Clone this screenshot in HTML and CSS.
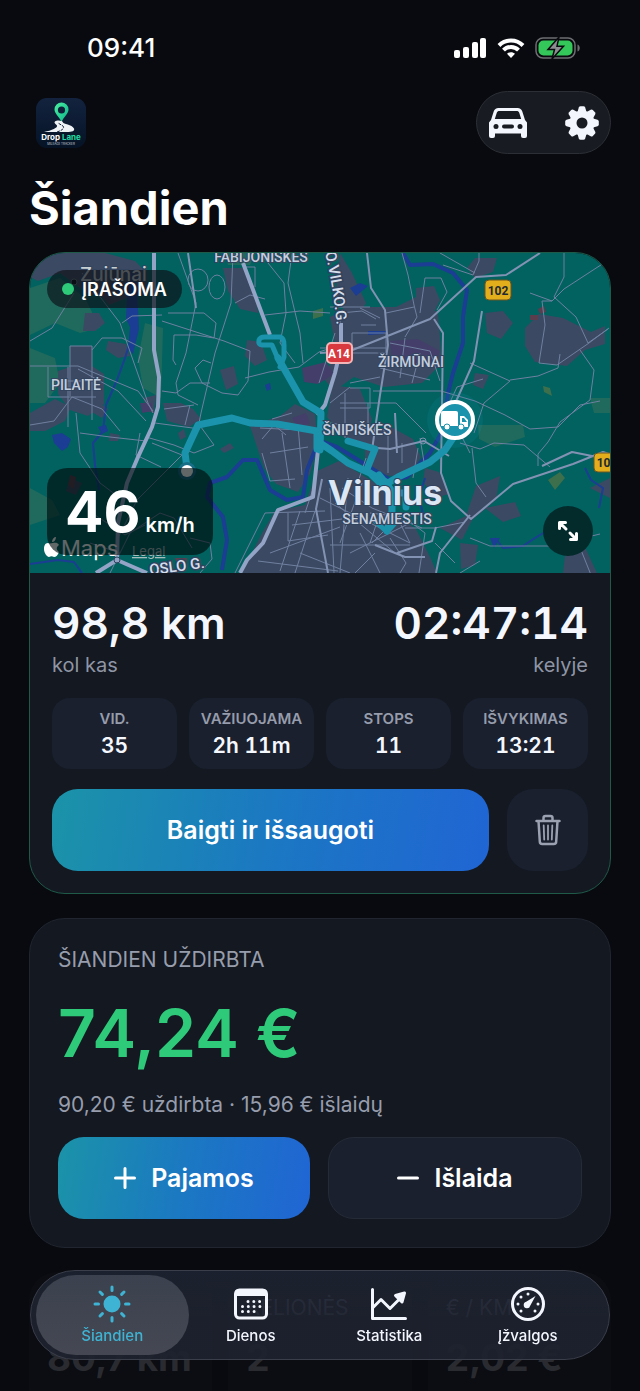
FILE: index.html
```html
<!DOCTYPE html>
<html lang="lt">
<head>
    <meta charset="utf-8">
    <meta name="viewport" content="width=device-width, initial-scale=1">
    <title>Drop Lane</title>
    <link rel="stylesheet" href="styles.css">
</head>
<body>
    <div class="status-bar">
        <span class="clock">09:41</span>
        <div class="status-icons">
            <svg width="33" height="20" viewBox="0 0 33 20" fill="#fff">
                <rect x="0" y="12" width="6" height="8" rx="2"/>
                <rect x="9" y="9" width="6" height="11" rx="2"/>
                <rect x="18" y="4" width="6" height="16" rx="2"/>
                <rect x="26" y="0" width="6" height="20" rx="2"/>
            </svg>
            <svg width="28" height="20" viewBox="0 0 28 20" fill="none" stroke="#fff" stroke-width="4">
                <path d="M2 7.500C8.500 .8 19.500 .8 26 7.500"/>
                <path d="M6.500 12.200C10.500 8 17.500 8 21.500 12.200"/>
                <path d="M14 20l-4-4.200c2-2.100 6-2.100 8 0z" fill="#fff" stroke="none"/>
            </svg>
            <svg width="46" height="22" viewBox="0 0 46 22">
                <rect x="1" y="1" width="39" height="20" rx="7" fill="none" stroke="#6c6e72" stroke-width="1.500"/>
                <rect x="3.500" y="3.500" width="34" height="15" rx="5" fill="#34c759"/>
                <path d="M42.500 7.500c3 1 3 6 0 7z" fill="#6c6e72"/>
                <path d="M24 0L13 12.500h6.500L17 22l11.500-12.800H22z" fill="#8b8d90" stroke="#080a0f" stroke-width="1.500"/>
            </svg>
        </div>
    </div>

    <header class="toolbar">
        <svg class="logo" width="50" height="50" viewBox="0 0 50 50" role="img" aria-label="Drop Lane">
            <defs>
                <linearGradient id="logoBg" x1="0" y1="0" x2="0" y2="1">
                    <stop offset="0" stop-color="#13233f"/>
                    <stop offset="1" stop-color="#061326"/>
                </linearGradient>
                <linearGradient id="pin" x1="0" y1="0" x2="1" y2="1">
                    <stop offset="0" stop-color="#4df0a0"/>
                    <stop offset="1" stop-color="#08b58a"/>
                </linearGradient>
            </defs>
            <rect width="50" height="50" rx="11" fill="url(#logoBg)"/>
            <path d="M25.500 24c-2-5-7-8.500-7-12.500a7 7 0 0 1 14 0c0 4-5 7.500-7 12.500z" fill="url(#pin)"/>
            <circle cx="25.500" cy="12" r="3.600" fill="#10203b"/>
            <path d="M8 34c8-1.500 14-4.500 13-6.500-1-1.500-3.500-2.500-2-4 2-1.800 8-1 8 1 0 1.500 9 2 11 6 1 2.500-2 3.500-7 3.500z" fill="#eef2f5"/>
            <path d="M21 34c5-1.500 8-4 6-6l-5-3" fill="none" stroke="#14233c" stroke-width="1" stroke-dasharray="3 1"/>
            <text class="logo-name" x="25" y="42">Drop <tspan fill="#21dba4">Lane</tspan></text>
            <text class="logo-tag" x="25" y="47">MILEAGE TRACKER</text>
        </svg>
        <div class="toolbar-actions">
            <button aria-label="Automobilis">
                <svg width="40" height="32" viewBox="0 0 40 32">
                    <path d="M10.500 1h19c2.500 0 4 1.200 4.800 3.500L37 13l2 2.500V29a2 2 0 0 1-2 2h-2a2 2 0 0 1-2-2v-2.500H7V29a2 2 0 0 1-2 2H3a2 2 0 0 1-2-2V15.500L3 13l2.700-8.500C6.500 2.200 8 1 10.500 1z" fill="#f3f6fd"/>
                    <path d="M11.500 4h17c1.500 0 2.300.6 2.800 2l1.900 6H6.800l1.900-6c.5-1.400 1.300-2 2.800-2z" fill="#181b21"/>
                    <circle cx="8" cy="19.500" r="2.500" fill="#181b21"/>
                    <circle cx="32" cy="19.500" r="2.500" fill="#181b21"/>
                    <rect x="14" y="17.500" width="12" height="4" rx="2" fill="#181b21"/>
                </svg>
            </button>
            <button aria-label="Nustatymai">
                <svg width="34" height="34" viewBox="-17 -17 34 34">
                    <g fill="#f3f6fd">
                        <circle r="12.500"/>
                        <path id="tooth" d="M-4.500-11L-3.200-15.500Q-2.800-16.800-1.500-16.800H1.500Q2.800-16.800 3.200-15.500L4.500-11z"/>
                        <use href="#tooth" transform="rotate(45)"/>
                        <use href="#tooth" transform="rotate(90)"/>
                        <use href="#tooth" transform="rotate(135)"/>
                        <use href="#tooth" transform="rotate(180)"/>
                        <use href="#tooth" transform="rotate(225)"/>
                        <use href="#tooth" transform="rotate(270)"/>
                        <use href="#tooth" transform="rotate(315)"/>
                    </g>
                    <circle r="5.500" fill="#181b21"/>
                </svg>
            </button>
        </div>
    </header>

    <main>
        <h1>Šiandien</h1>

        <section class="card trip">
            <div class="map">
                <svg class="map-canvas" viewBox="0 0 580 320" preserveAspectRatio="xMidYMid slice">
                    <rect width="580" height="320" fill="#016260"/>
                    <!-- woodland -->
                    <g fill="#1f6a5d">
                        <path d="M0 35l30-10 25 20 15 30-20 5-25-10-25 12zM115 70l18 5-2 70-18-10-5-30zM0 95l25 10 5 25-15 20-15 0zM0 235l22 12 8 15-30 10zM195 0h30l-5 12h-22zM448 172h45l2 12-30 10-16-8zM280 285l20-5 5 20-20 18zM560 145h20v15h-16z"/>
                        <path fill="#3d6f4c" d="M518 227l12-8 5 6-10 12zM513 133l7 2 2 8-8-4zM283 58l10-3v8l-10 3z"/>
                    </g>
                    <!-- built-up areas -->
                    <g fill="#3c4962">
                        <path d="M0 0h75l30 8 12 12v22H60L30 20 8 28 0 24z"/>
                        <path d="M55 60h14l6 10-10 8h-12zM40 93h22v20l12 8v30l-16 12-18-6-12-16V118l12-4zM0 160l25-14 16 8-6 14-20 10H0zM60 158l10-8 8 6-6 9zM80 180l10 2-2 6-9 0zM78 88l18 3 4 12-12 2-12-8zM63 12h22l20 12-6 20-20 8-12-14z"/>
                        <path d="M133 150h18l12 6 8 10-12 8-22-6zM114 145l12-3-2 18-8-2zM148 180l6-4 2 8-6 3zM193 15l22 0 10 20 3 25-18-4-12-18zM217 87l14 2 6 18-12 6-10-10zM190 117l14-4 4 18-12 6z"/>
                        <path d="M220 173l30-10 15-12 20 10 3 30-8 30-12 18-22-8-12-16zM190 196l10-6 4 5-10 5zM245 258l30-6 12-34 22-10 20 12 25 15 10 25 22 16 15 30 6 14H212l20-40z"/>
                        <path d="M300 64l22-10h44l20-10 22 16 4 50-20 20-38 4-30-10-20 14-10-12 12-30zM386 35l18-2 6 14-10 20-14-6zM310 0l12 20 14 30-8 14-14-6-8-20zM302 132l28 4 12 30-5 24-24-6-16-20z"/>
                        <path d="M335 180l26-6 22 12 8 18-12 20-30-2-14-16zM395 215l14 4 10 22-14 4-12-16zM445 5h22l-4 14-18 6-8-10zM455 60l18-2 10 12-12 16-14-6zM495 75l14-14 24 4 28 14 14-6v18l-20 6-18 16-32-4-10-16zM445 120l14 2-6 14-10-4zM410 275l26-12 10-30 24-10-4 24-24 20-10 20zM455 255l30-6 6 14-18 6zM535 302l20-8 12 26h-34zM560 235l20-10v20zM430 290l18 2-3 20-14 4zM40 225l12 5-6 12-10-4z"/>
                        <path fill="#433f6a" d="M360 88l28-2 22 12-4 12-20 4-24-8zM272 115l24-6 8 12-16 10-14-2zM262 165l14-5 4 10-12 6zM110 150l12 0 0 8-10 2z"/>
                        <path fill="#5a3e4e" d="M508 56l6-3 2 6-6 2zM40 222l6 2-2 12-6-4zM500 62h8v5h-8zM145 305h12v6h-10z"/>
                    </g>
                    <!-- rivers and ponds -->
                    <g fill="none" stroke="#1b3d93" stroke-linejoin="round">
                        <path stroke-width="4" d="M373 0l7 12 23-1 20 9 14 17-4 27v26l-10 30-5 20-5 37-13 23-23 24-17 3-27-17-26-16-14-5-6 3-10 25-4 27-16 3-17-10-13-30h-14l-16 17-17 6-3 14 16 20 4 23-5 30"/>
                        <path stroke-width="2" d="M103 20v60l-8 25-8 22-11 25-3 26-10 12 2 22 4 25M0 311l28-4 16 2 8 11M465 285l8 10 20-2 12-8 10-6M555 215l6 12 12 8-4 20M395 225l-6 20 5 20"/>
                        <path fill="#1b3d93" stroke="none" d="M98 20l8-4 3 60-6 25-5-5 2-22-4-8zM22 182l10-2 9 6-3 8-6 4-8-8zM68 174l8-2 2 6-6 3zM320 35l10-5 8 3-12 10zM338 78h18l-2 3-16 1zM235 132l5-2 1 6-4 2zM460 285l10 0-6 10z"/>
                    </g>
                    <!-- side streets -->
                    <g fill="none" stroke="#6f80a0" stroke-width="1" stroke-linejoin="round">
                        <path d="M0 88l22-13 22-35M52 20l38 50 28 80 5 10M0 113h48l60 25 15 20M48 116l40 22 28 30M40 93h22v74M40 93v50M18 114v30h48M28 128h32M38 114v60M0 172l24-4 18-24 30 12 18 22M46 160l4 40 20 30 16 12M50 180l30 4 36 4M62 97l10-12 20 0 20 10-4 15M92 70l10-7 30-1"/>
                        <path d="M148 0l18 50-10 50-10 30 2 12 20 10M138 60h36l12 10-2 15-18-3-22 0-1 25 3 5M203 0l-2 50-16 50-14 60-2 10M132 68l62 20 26 10-2 30-10 14-16-2-20-10-7-15 8-8 8 3M132 138l14 2 14-10 20 0M125 170l45 6M134 156l30-4M160 152l-5 20M168 170l16 22-20 8-20-8-28-8M122 190l30 12-25 25-20 20-20 40M110 180l-4 22 25 12M215 14h10v20M205 50l15-8 15 4"/>
                        <ellipse cx="168" cy="27" rx="10" ry="11"/>
                        <ellipse cx="187" cy="34" rx="8" ry="12"/>
                        <path d="M230 0l24 30 2 30-6 30 15 20M262 0l-4 30 12 50 3 30M300 60l-30-2-35 4M215 125l24-6 30-5 20-15 12-4M230 175l40 2M232 186l12-14 12 10M240 200l38-6M232 200l8 28 25-2M252 180l8 55M268 172l4 50M262 160l-20 6"/>
                        <path d="M305 80l-16 50M300 54h40M310 70v-10l22-2 14 8M322 80h34v20h-34zM331 72h15M290 95l66 0M315 140v45M310 150h28v26M320 135h20v20h-30M300 170l55 8M338 150h28l30 30M320 130l30-6M300 150l20-16M356 60l28-6M350 115l50 12M360 90l40 8 10 30M375 85l-5 40M390 100l-8 30M330 55l20 10"/>
                        <path d="M372 0l6 22 6 30 3 12-12 20M390 60l5-35 16 0 6 14-10 18M413 12l30 10 6-14V0M410 0l35 20M500 40l22 8 12-12 46-30M522 48l-10 0 3 24-6 38 18 2 32-22 20-15M534 0v24l-10 20 22 20 12 26 20-14M480 127l28-4 20-8 2-14M550 97l14 20-4 30-30 22-12 20-10 12v12M570 148l-20 4-22 22-28 2-25-14-30-14-34-10-68 0M440 110l40 18-26 22-10 30M415 160l12-26 26-8M430 190l20 6 14-6 30 2 26 22M442 195l4 35 10 14M545 282l18 45"/>
                        <path d="M440 285l20 8 60 0 50-12M375 275l30 0 30-6M430 180l10 20M395 215l-5-30"/>
                        <path d="M205 320l30-60 60-2M258 260v28l40-6M262 272l50-6M240 300l70-26M228 308l80 10M270 258l-20 60M285 258l-20 62M300 235l4 85M318 225l-8 95M332 230l-22 60M285 230l-10 30M290 245l90 45M305 250l60 50M320 300l60-30M330 280l20 40M350 260l-10 30M300 292h80M360 250l20 40M340 260l40 5M270 300l50 20M345 300l-20 20M372 260l-30 30M312 235l30 20 50 20M358 180v40M372 190v20M336 205l-10 30M388 195l-5 30M80 320l20-40 30-20 14 5 18 30M60 290l30 10M65 262l30 20 20-10M170 320l12-14-2-16-20-5M360 285l16 25-6 10M375 265l20 15-6 40M405 290l20 20M430 320l20-12"/>
                    </g>
                    <!-- main roads -->
                    <g fill="none" stroke="#8292b2" stroke-linejoin="round">
                        <path stroke-width="2" d="M158 0l8 55M337 0l4 35 14 22 3 35-8 50-8 55M290 100l30-2 80-32 46-42 30-2 34-22M452 58l-8 50-20 45-8 30M404 66l9 14-2 140 10 28 20 18 42-35 60-20 30-12 25 8M335 194l25 2 34-8 25 15M367 200l-2-40M440 262l-30 38-4 20M292 226l-6 30 12 64M367 300l35-12 4-14M345 292l30 12 20 0M512 213l30-14 25 5"/>
                        <circle cx="393" cy="188" r="3" stroke-width="1"/>
                        <g stroke="#93a4c6" stroke-width="4">
                            <path d="M124 0v97l5 27-1 30-6 20-14 30-11 26-9 40-1 37-21 13M87 307l30 13"/>
                            <path d="M213 10l27 72M311 70v24l-6 26-10 32-8 10M288 197l-5 47-35 13-15 33-16 17-7 13"/>
                        </g>
                    </g>
                    <circle cx="87" cy="307" r="3" fill="none" stroke="#33445f"/>
                    <!-- recorded route -->
                    <g fill="none" stroke="#1b93ac" stroke-width="7" stroke-linejoin="round" stroke-linecap="round">
                        <path d="M157 215l-2-15 13-28 34-7 18 5 27 1 40 7v18M248 105l25 44 18 11-1 37M290 190l12 8 16 12 22 10 18 10 10-6 32-15 15-12 12-18M318 188l27 8-8 20M349 222l13 16v20l-5 20M340 220l22 22M362 240h14v14"/>
                        <path d="M232 92q-4 0-3-5 1-3 6-3h15q4 1 4 8v12l-4 10M232 92h10l6 14" stroke-width="5"/>
                        <path d="M345 268l12 11 9-10" stroke-width="5"/>
                    </g>
                    <circle cx="157" cy="218" r="9" fill="#176f87"/>
                    <circle cx="157" cy="218" r="6" fill="#fff"/>
                    <!-- place names -->
                    <circle cx="44" cy="29" r="3" fill="#030b10" stroke="#5d7577"/>
                    <text class="place village" x="50" y="28">Zujūnai</text>
                    <text class="place" x="231" y="9" text-anchor="middle">FABIJONIŠKĖS</text>
                    <text class="place" x="46" y="137" text-anchor="middle">PILAITĖ</text>
                    <text class="place" x="381" y="114" text-anchor="middle">ŽIRMŪNAI</text>
                    <text class="place" x="327" y="182" text-anchor="middle">ŠNIPIŠKĖS</text>
                    <text class="place" x="357" y="271" text-anchor="middle">SENAMIESTIS</text>
                    <text class="place city" x="355" y="252" text-anchor="middle">Vilnius</text>
                    <path id="vilkoStreet" d="M295 0Q304 35 308 86" fill="none"/>
                    <text class="street"><textPath href="#vilkoStreet">O.VILKO.G.</textPath></text>
                    <path id="osloStreet" d="M120 322L188 313" fill="none"/>
                    <text class="street"><textPath href="#osloStreet">OSLO G.</textPath></text>
                    <!-- road shields -->
                    <g class="shield">
                        <rect x="297" y="90" width="25" height="20" rx="4" fill="#d8383e" stroke="#f3b6b8" stroke-width="2"/>
                        <text x="309" y="105" fill="#fff">A14</text>
                        <rect x="455" y="27" width="26" height="20" rx="4" fill="#e2ae1b" stroke="#6b5420" stroke-width="1"/>
                        <text x="468" y="42" fill="#1d2a33">102</text>
                        <rect x="564" y="200" width="26" height="19" rx="4" fill="#e2ae1b" stroke="#6b5420" stroke-width="1"/>
                        <text x="577" y="214" fill="#1d2a33">103</text>
                    </g>
                    <!-- attribution -->
                    <path d="M23 290c-2 0-3 1-5 0-3 0-4 3-4 6 0 4 3 8 5 8 2-1 3-1 5 0 2 0 4-2 5-5-3-2-3-5 0-7-2-3-4-2-6-2zM22 289c0-3 2-5 4-5 0 3-2 5-4 5z" fill="#fff"/>
                    <text class="maps-brand" x="31" y="303">Maps</text>
                    <text class="maps-legal" x="102" y="303">Legal</text>
                    <!-- vehicle -->
                    <circle cx="425" cy="167" r="28" fill="#1b93ac" opacity=".15"/>
                    <circle cx="425" cy="167" r="18" fill="#1b93ac" stroke="#fff" stroke-width="4"/>
                    <path d="M413 158h13a2 2 0 0 1 2 2v13h-17v-13a2 2 0 0 1 2-2zM430 163h4l4 4v7h-8z" fill="#fff"/>
                    <path d="M432 165h2l3 4h-5z" fill="#1b93ac"/>
                    <g fill="#fff" stroke="#1b93ac">
                        <circle cx="417" cy="174" r="3"/>
                        <circle cx="431" cy="174" r="3"/>
                    </g>
                </svg>
                <span class="recording"><i class="dot"></i>ĮRAŠOMA</span>
                <div class="speed"><b>46</b> km/h</div>
                <button class="expand" aria-label="Išskleisti žemėlapį">
                    <svg width="22" height="22" viewBox="0 0 22 22" fill="none" stroke="#fff" stroke-width="3" stroke-linecap="round" stroke-linejoin="round">
                        <path d="M2.500 8.500v-6h6M3 3l6 6M19.500 13.500v6h-6M19 19l-6-6"/>
                    </svg>
                </button>
            </div>

            <div class="trip-body">
                <div class="totals">
                    <div>
                        <strong>98,8 km</strong>
                        <span>kol kas</span>
                    </div>
                    <div class="right">
                        <strong>02:47:14</strong>
                        <span>kelyje</span>
                    </div>
                </div>
                <dl class="facts">
                    <div><dt>VID.</dt><dd>35</dd></div>
                    <div><dt>VAŽIUOJAMA</dt><dd>2h 11m</dd></div>
                    <div><dt>STOPS</dt><dd>11</dd></div>
                    <div><dt>IŠVYKIMAS</dt><dd>13:21</dd></div>
                </dl>
                <div class="actions">
                    <button class="btn primary">Baigti ir išsaugoti</button>
                    <button class="btn trash" aria-label="Ištrinti">
                        <svg width="26" height="32" viewBox="0 0 26 32" fill="none" stroke="#9ba1b0" stroke-width="2.500" stroke-linecap="round" stroke-linejoin="round">
                            <path d="M1.500 7h23M8.500 7V4a2 2 0 0 1 2-2h5a2 2 0 0 1 2 2v3M3.500 7l1.300 20.500a2.500 2.500 0 0 0 2.500 2.500h11.400a2.500 2.500 0 0 0 2.500-2.500L22.500 7"/>
                            <path d="M8.700 11.500l.5 14M13 11.500v14M17.300 11.500l-.5 14" stroke-width="1.800"/>
                        </svg>
                    </button>
                </div>
            </div>
        </section>

        <section class="card earnings">
            <h2>ŠIANDIEN UŽDIRBTA</h2>
            <p class="amount">74,24 €</p>
            <p class="breakdown">90,20 € uždirbta · 15,96 € išlaidų</p>
            <div class="earnings-actions">
                <button class="btn primary">
                    <svg width="22" height="22" viewBox="0 0 22 22" stroke="#fff" stroke-width="3" stroke-linecap="round"><path d="M1.500 11h19M11 1.500v19"/></svg>
                    Pajamos
                </button>
                <button class="btn secondary">
                    <svg width="22" height="22" viewBox="0 0 22 22" stroke="#fff" stroke-width="3" stroke-linecap="round"><path d="M1.500 11h19"/></svg>
                    Išlaida
                </button>
            </div>
        </section>

        <section class="summary">
            <div><span></span><b>80,7 km</b></div>
            <div><span>KELIONĖS</span><b>2</b></div>
            <div><span>€ / KM</span><b>2,02 €</b></div>
        </section>
    </main>

    <nav class="tabs">
        <a class="active" href="#today">
            <svg width="38" height="38" viewBox="-19 -19 38 38" stroke="#3fb3d3" stroke-width="3" stroke-linecap="round">
                <circle r="8.500" fill="#3fb3d3" stroke="none"/>
                <path d="M0-17v3.500M0 17v-3.500M-17 0h3.500M17 0h-3.500M-12-12l2.400 2.400M12-12l-2.400 2.400M-12 12l2.400-2.400M12 12l-2.400-2.400"/>
            </svg>
            Šiandien
        </a>
        <a href="#days">
            <svg width="38" height="38" viewBox="0 0 38 38">
                <rect x="3.500" y="5" width="31" height="28" rx="4" fill="none" stroke="#f3f6fd" stroke-width="3"/>
                <path d="M3 11V8a4 4 0 0 1 4-4h24a4 4 0 0 1 4 4v3z" fill="#f3f6fd"/>
                <path d="M16 16.500h13M10.500 21.500h18M10.500 26.500h13" stroke="#f3f6fd" stroke-width="3" stroke-linecap="round" stroke-dasharray="0 5.800"/>
            </svg>
            Dienos
        </a>
        <a href="#stats">
            <svg width="38" height="38" viewBox="0 0 38 38" fill="none" stroke="#f3f6fd" stroke-width="3" stroke-linecap="round" stroke-linejoin="round">
                <path d="M2.500 4.500v29h33M3.500 22l7.500-7.500 9 9 9-9"/>
                <path d="M25.500 10.500l9-2.500-2.500 9z" fill="#f3f6fd"/>
            </svg>
            Statistika
        </a>
        <a href="#insights">
            <svg width="38" height="38" viewBox="0 0 38 38">
                <circle cx="19" cy="19" r="15.500" fill="none" stroke="#f3f6fd" stroke-width="3"/>
                <path d="M26.500 11l-5.300 9.800a3.300 3.300 0 1 1-4-4z" fill="#f3f6fd"/>
                <g fill="#f3f6fd">
                    <circle cx="19" cy="9" r="1.500"/>
                    <circle cx="12" cy="12" r="1.500"/>
                    <circle cx="9" cy="19" r="1.500"/>
                    <circle cx="29" cy="19" r="1.500"/>
                    <circle cx="12" cy="26" r="1.500"/>
                    <circle cx="26" cy="26" r="1.500"/>
                </g>
            </svg>
            Įžvalgos
        </a>
    </nav>
</body>
</html>
```
FILE: styles.css
```css
* {
    box-sizing: border-box;
}
body {
    margin: 0;
    background: #080a0f;
    color: #f5f7ff;
    font-family: Inter, "Noto Sans", sans-serif;
}
button {
    border: 0;
    padding: 0;
    background: none;
    color: inherit;
    font: inherit;
    cursor: pointer;
}
svg {
    display: block;
}

/* status bar */
.status-bar {
    display: flex;
    justify-content: space-between;
    align-items: center;
    height: 91px;
    padding: 4px 59px 0 87px;
}
.clock {
    font-size: 26px;
    font-weight: 500;
    color: #fff;
}
.status-icons {
    display: flex;
    align-items: center;
    gap: 10px;
}

/* toolbar */
.toolbar {
    display: flex;
    justify-content: space-between;
    align-items: center;
    padding: 0 29px 0 36px;
}
.logo-name {
    font-size: 8px;
    font-weight: 700;
    fill: #fff;
    text-anchor: middle;
}
.logo-tag {
    font-size: 3px;
    fill: #c4ccd8;
    text-anchor: middle;
}
.toolbar-actions {
    display: flex;
    justify-content: space-between;
    align-items: center;
    width: 135px;
    height: 63px;
    padding: 0 11px;
    border: 1px solid #2c2f35;
    border-radius: 32px;
    background: #181b21;
}

main {
    padding: 0 29px;
}
h1 {
    margin: 24px 0 14px;
    font-size: 47px;
    line-height: 60px;
    font-weight: 700;
    color: #fff;
}

.card {
    border: 1px solid #20252f;
    border-radius: 36px;
    background: #131821;
    overflow: hidden;
}
.trip {
    border-color: #1f5a49;
}

/* map */
.map {
    position: relative;
    height: 320px;
}
.map-canvas {
    width: 100%;
    height: 100%;
}
.place {
    font-family: "Liberation Sans Narrow", Roboto, sans-serif;
    font-size: 14px;
    font-weight: 500;
    fill: #c3cede;
    stroke: #33445f;
    stroke-width: 2px;
    paint-order: stroke;
}
.place.village {
    font-family: Inter, sans-serif;
    font-size: 19px;
    fill: #c6d0d3;
}
.place.city {
    font-family: Inter, sans-serif;
    font-size: 34px;
    font-weight: 700;
    fill: #dbe7f5;
}
.street {
    font-family: Roboto, sans-serif;
    font-size: 15px;
    font-weight: 500;
    fill: #d5deec;
    stroke: #33445f;
    stroke-width: 3px;
    paint-order: stroke;
}
.shield text {
    font-family: Roboto, sans-serif;
    font-size: 12px;
    font-weight: 700;
    text-anchor: middle;
}
.maps-brand {
    font-size: 22px;
    fill: #fff;
}
.maps-legal {
    font-size: 13px;
    fill: #a9bcbc;
    text-decoration: underline;
}
.recording {
    position: absolute;
    top: 17px;
    left: 17px;
    display: flex;
    align-items: center;
    gap: 8px;
    height: 38px;
    padding: 0 15px;
    border-radius: 19px;
    background: rgba(14, 18, 24, .68);
    color: #fff;
    font-size: 18px;
    font-weight: 600;
}
.dot {
    width: 12px;
    height: 12px;
    border-radius: 50%;
    background: #2fc97a;
}
.speed {
    position: absolute;
    left: 17px;
    bottom: 18px;
    height: 87px;
    padding: 0 18px;
    border-radius: 20px;
    background: rgba(0, 8, 10, .62);
    color: #fff;
    font-size: 20px;
    line-height: 87px;
    font-weight: 600;
}
.speed b {
    font-size: 57px;
    font-weight: 700;
}
.expand {
    position: absolute;
    right: 17px;
    bottom: 17px;
    display: grid;
    place-items: center;
    width: 50px;
    height: 50px;
    border-radius: 50%;
    background: #032b2c;
}

/* current trip */
.trip-body {
    padding: 25px 22px 22px;
}
.totals {
    display: flex;
    justify-content: space-between;
}
.totals strong {
    display: block;
    font-size: 44px;
    line-height: 50px;
    font-weight: 600;
    font-variant-numeric: tabular-nums;
}
.totals span {
    display: block;
    margin-top: 4px;
    font-size: 20px;
    line-height: 26px;
    color: #8f95a4;
}
.right {
    text-align: right;
}
.facts {
    display: grid;
    grid-template-columns: repeat(4, 1fr);
    gap: 12px;
    margin: 20px 0;
    text-align: center;
}
.facts div {
    height: 71px;
    padding-top: 11px;
    border-radius: 18px;
    background: #1a202e;
}
.facts dt {
    font-size: 15px;
    line-height: 20px;
    font-weight: 600;
    color: #969cab;
}
.facts dd {
    margin: 4px 0 0;
    font-size: 21px;
    line-height: 26px;
    font-weight: 600;
    font-variant-numeric: tabular-nums;
}
.btn {
    display: flex;
    justify-content: center;
    align-items: center;
    gap: 15px;
    height: 82px;
    border-radius: 26px;
    font-size: 25px;
    font-weight: 600;
}
.primary {
    flex: 1;
    background: linear-gradient(100deg, #1b93a8, #1b78c2 50%, #2065d4);
    color: #fff;
}
.secondary {
    flex: 1;
    border: 1px solid #262b38;
    background: #1a202e;
    color: #fff;
}
.actions {
    display: flex;
    gap: 18px;
}
.trash {
    width: 81px;
    background: #1a202e;
}

/* earnings */
.earnings {
    margin-top: 24px;
    padding: 26px 28px 28px;
}
.earnings h2 {
    margin: 0;
    font-size: 21px;
    line-height: 30px;
    font-weight: 400;
    color: #979dac;
}
.amount {
    margin: 12px 0;
    font-size: 66px;
    line-height: 92px;
    font-weight: 600;
    color: #2fc97a;
}
.breakdown {
    margin: 0 0 18px;
    font-size: 21px;
    line-height: 28px;
    color: #979dac;
}
.earnings-actions {
    display: flex;
    gap: 18px;
}

/* summary tiles under the tab bar */
.summary {
    display: grid;
    grid-template-columns: repeat(3, 1fr);
    gap: 16px;
    margin-top: 24px;
}
.summary div {
    height: 120px;
    padding: 20px 18px 0;
    border-radius: 28px 28px 0 0;
    background: #0b0d12;
}
.summary span {
    display: block;
    height: 32px;
    font-size: 21px;
    line-height: 32px;
    color: #70758a;
}
.summary b {
    display: block;
    margin-top: 12px;
    font-size: 37px;
    line-height: 44px;
    color: #292b30;
}

/* tab bar */
.tabs {
    position: fixed;
    left: 30px;
    right: 30px;
    bottom: 31px;
    display: grid;
    grid-template-columns: repeat(4, 1fr);
    height: 90px;
    padding: 4px 12px;
    border: 1px solid #3a3e4a;
    border-radius: 45px;
    background: linear-gradient(rgba(30, 37, 51, .85), rgba(30, 34, 46, .94) 60%);
}
.tabs a {
    display: flex;
    flex-direction: column;
    align-items: center;
    gap: 4px;
    margin: 0 -7px;
    padding-top: 10px;
    border-radius: 40px;
    font-size: 15px;
    line-height: 18px;
    font-weight: 500;
    color: #f3f6fd;
    text-decoration: none;
}
.tabs .active {
    background: linear-gradient(#3b414e, #454853);
    color: #3fb3d3;
}
```
